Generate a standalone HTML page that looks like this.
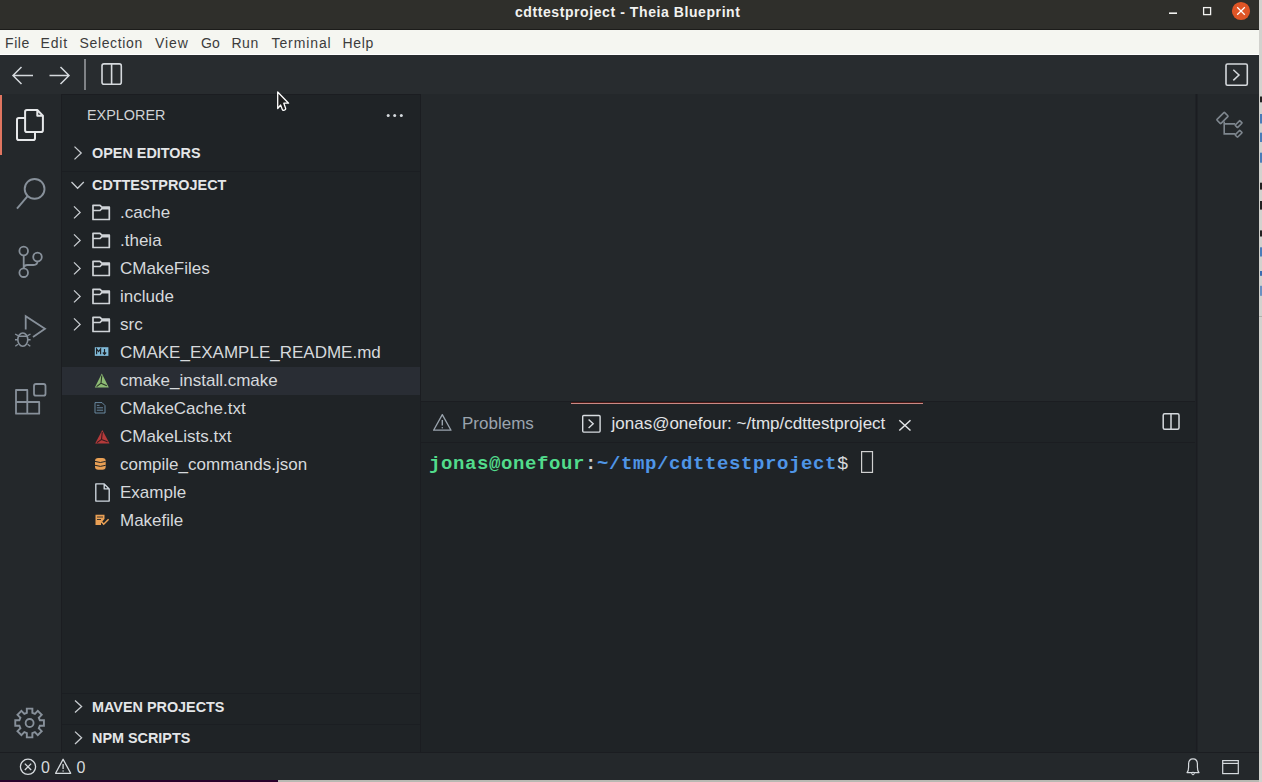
<!DOCTYPE html>
<html><head><meta charset="utf-8">
<style>
*{margin:0;padding:0;box-sizing:border-box}
html,body{width:1262px;height:782px;overflow:hidden;background:#1f2326;font-family:"Liberation Sans",sans-serif}
.a{position:absolute}
.t{white-space:pre}
</style></head><body>
<div class="a" style="left:0px;top:0px;width:1262px;height:29px;background:#2f2f2b;"></div>
<div class="a" style="left:0px;top:29px;width:1262px;height:1px;background:#1c1c1a;"></div>
<div class="a" style="left:0px;top:30px;width:1262px;height:25px;background:#f5f6f1;"></div>
<div class="a" style="left:0px;top:54px;width:1262px;height:1px;background:#ffffff;"></div>
<div class="a" style="left:0px;top:55px;width:1262px;height:39px;background:#282c2f;"></div>
<div class="a" style="left:0px;top:94px;width:62px;height:658px;background:#24282b;"></div>
<div class="a" style="left:62px;top:94px;width:358px;height:658px;background:#1f2326;"></div>
<div class="a" style="left:420px;top:94px;width:1px;height:658px;background:#1b1d21;"></div>
<div class="a" style="left:61px;top:94px;width:1px;height:658px;background:#1b1d21;"></div>
<div class="a" style="left:61px;top:94px;width:359px;height:1px;background:#1b1d21;"></div>
<div class="a" style="left:421px;top:94px;width:774px;height:307px;background:#24282b;"></div>
<div class="a" style="left:421px;top:401px;width:774px;height:351px;background:#1f2326;"></div>
<div class="a" style="left:421px;top:401px;width:774px;height:1px;background:#1b1d21;"></div>
<div class="a" style="left:1195px;top:94px;width:3px;height:658px;background:#1f2226;"></div>
<div class="a" style="left:1196px;top:94px;width:1px;height:658px;background:#1b1d21;"></div>
<div class="a" style="left:1198px;top:94px;width:61px;height:658px;background:#24282b;"></div>
<div class="a" style="left:0px;top:752px;width:1259px;height:28px;background:#24282b;"></div>
<div class="a" style="left:0px;top:752px;width:1259px;height:1px;background:#1b1d21;"></div>
<div class="a" style="left:0px;top:780px;width:278px;height:2px;background:#29002a;"></div>
<div class="a" style="left:278px;top:780px;width:984px;height:2px;background:#b8b8b2;"></div>
<div class="a" style="left:1259px;top:0px;width:3px;height:782px;background:#d2d2ce;"></div>
<div class="a" style="left:0px;top:95px;width:2px;height:60px;background:#e07560;"></div>
<div class="a t" style="left:515px;top:2.15px;font-size:14px;line-height:20px;color:#f2f2f0;font-weight:700;font-family:'Liberation Sans';letter-spacing:0.58px">cdttestproject - Theia Blueprint</div>
<div class="a t" style="left:5px;top:33.15px;font-size:14px;line-height:20px;color:#3c3c3c;font-weight:400;font-family:'Liberation Sans';letter-spacing:0.6px">File</div>
<div class="a t" style="left:40.5px;top:33.15px;font-size:14px;line-height:20px;color:#3c3c3c;font-weight:400;font-family:'Liberation Sans';letter-spacing:0.8px">Edit</div>
<div class="a t" style="left:79.5px;top:33.15px;font-size:14px;line-height:20px;color:#3c3c3c;font-weight:400;font-family:'Liberation Sans';letter-spacing:0.65px">Selection</div>
<div class="a t" style="left:155px;top:33.15px;font-size:14px;line-height:20px;color:#3c3c3c;font-weight:400;font-family:'Liberation Sans';letter-spacing:0.9px">View</div>
<div class="a t" style="left:201px;top:33.15px;font-size:14px;line-height:20px;color:#3c3c3c;font-weight:400;font-family:'Liberation Sans';letter-spacing:0px">Go</div>
<div class="a t" style="left:231.5px;top:33.15px;font-size:14px;line-height:20px;color:#3c3c3c;font-weight:400;font-family:'Liberation Sans';letter-spacing:0.5px">Run</div>
<div class="a t" style="left:271.5px;top:33.15px;font-size:14px;line-height:20px;color:#3c3c3c;font-weight:400;font-family:'Liberation Sans';letter-spacing:0.9px">Terminal</div>
<div class="a t" style="left:342.5px;top:33.15px;font-size:14px;line-height:20px;color:#3c3c3c;font-weight:400;font-family:'Liberation Sans';letter-spacing:0.65px">Help</div>
<div class="a t" style="left:87px;top:105.01px;font-size:14.4px;line-height:20px;color:#d0d3d6;font-weight:400;font-family:'Liberation Sans';">EXPLORER</div>
<div class="a t" style="left:92px;top:142.51px;font-size:14.4px;line-height:20px;color:#e4e6e8;font-weight:700;font-family:'Liberation Sans';">OPEN EDITORS</div>
<div class="a" style="left:62px;top:171px;width:358px;height:1px;background:#1b1e22;"></div>
<div class="a t" style="left:92px;top:174.61px;font-size:14.4px;line-height:20px;color:#e4e6e8;font-weight:700;font-family:'Liberation Sans';">CDTTESTPROJECT</div>
<div class="a" style="left:62px;top:367px;width:358px;height:28px;background:#292d34;"></div>
<div class="a t" style="left:120px;top:201.11px;font-size:17px;line-height:24px;color:#d6d9dc;font-weight:400;font-family:'Liberation Sans';">.cache</div>
<div class="a t" style="left:120px;top:229.11px;font-size:17px;line-height:24px;color:#d6d9dc;font-weight:400;font-family:'Liberation Sans';">.theia</div>
<div class="a t" style="left:120px;top:257.11px;font-size:17px;line-height:24px;color:#d6d9dc;font-weight:400;font-family:'Liberation Sans';">CMakeFiles</div>
<div class="a t" style="left:120px;top:285.11px;font-size:17px;line-height:24px;color:#d6d9dc;font-weight:400;font-family:'Liberation Sans';">include</div>
<div class="a t" style="left:120px;top:313.11px;font-size:17px;line-height:24px;color:#d6d9dc;font-weight:400;font-family:'Liberation Sans';">src</div>
<div class="a t" style="left:120px;top:341.11px;font-size:17px;line-height:24px;color:#d6d9dc;font-weight:400;font-family:'Liberation Sans';">CMAKE_EXAMPLE_README.md</div>
<div class="a t" style="left:120px;top:369.11px;font-size:17px;line-height:24px;color:#d6d9dc;font-weight:400;font-family:'Liberation Sans';">cmake_install.cmake</div>
<div class="a t" style="left:120px;top:397.11px;font-size:17px;line-height:24px;color:#d6d9dc;font-weight:400;font-family:'Liberation Sans';">CMakeCache.txt</div>
<div class="a t" style="left:120px;top:425.11px;font-size:17px;line-height:24px;color:#d6d9dc;font-weight:400;font-family:'Liberation Sans';">CMakeLists.txt</div>
<div class="a t" style="left:120px;top:453.11px;font-size:17px;line-height:24px;color:#d6d9dc;font-weight:400;font-family:'Liberation Sans';">compile_commands.json</div>
<div class="a t" style="left:120px;top:481.11px;font-size:17px;line-height:24px;color:#d6d9dc;font-weight:400;font-family:'Liberation Sans';">Example</div>
<div class="a t" style="left:120px;top:509.11px;font-size:17px;line-height:24px;color:#d6d9dc;font-weight:400;font-family:'Liberation Sans';">Makefile</div>
<div class="a" style="left:62px;top:693px;width:358px;height:1px;background:#1b1e22;"></div>
<div class="a t" style="left:92px;top:697.31px;font-size:14.4px;line-height:20px;color:#e4e6e8;font-weight:700;font-family:'Liberation Sans';">MAVEN PROJECTS</div>
<div class="a" style="left:62px;top:724px;width:358px;height:1px;background:#1b1e22;"></div>
<div class="a t" style="left:92px;top:728.21px;font-size:14.4px;line-height:20px;color:#e4e6e8;font-weight:700;font-family:'Liberation Sans';">NPM SCRIPTS</div>
<div class="a t" style="left:462px;top:412.11px;font-size:17px;line-height:24px;color:#9aa4ae;font-weight:400;font-family:'Liberation Sans';">Problems</div>
<div class="a" style="left:571px;top:402px;width:352px;height:1px;background:#4a1816;"></div>
<div class="a" style="left:571px;top:403px;width:352px;height:1px;background:#c98a85;"></div>
<div class="a" style="left:421px;top:442px;width:774px;height:1px;background:#1b1d21;"></div>
<div class="a t" style="left:611.5px;top:412.11px;font-size:17px;line-height:24px;color:#e2e4e6;font-weight:400;font-family:'Liberation Sans';">jonas@onefour: ~/tmp/cdttestproject</div>
<div class="a t" style="left:429px;top:452px;font-family:'Liberation Mono';font-weight:bold;font-size:19px;letter-spacing:0.6px;line-height:24px"><span style="color:#52dc8c">jonas@onefour</span><span style="color:#d0d0d0">:</span><span style="color:#4f95e6">~/tmp/cdttestproject</span><span style="color:#d4d8dc;font-weight:normal">$ </span></div>
<div class="a t" style="left:41px;top:756.96px;font-size:16px;line-height:22px;color:#d6dade;font-weight:400;font-family:'Liberation Sans';">0</div>
<div class="a t" style="left:76.5px;top:756.96px;font-size:16px;line-height:22px;color:#d6dade;font-weight:400;font-family:'Liberation Sans';">0</div>
<svg class="a" style="left:0;top:0" width="1262" height="782" viewBox="0 0 1262 782"><rect x="1169" y="12.4" width="8" height="1.6" fill="#f2f2f0"/><rect x="1203.6" y="7.6" width="7" height="7" fill="none" stroke="#f2f2f0" stroke-width="1.3"/><circle cx="1241" cy="11" r="9.1" fill="#df5526"/><path d="M1237.2 7.2 L1244.8 14.8 M1244.8 7.2 L1237.2 14.8" stroke="#fff" stroke-width="1.25"/><path d="M33 75.5 H13 M21.5 67 L13 75.5 L21.5 84" fill="none" stroke="#d5d9dd" stroke-width="1.5"/><path d="M49.5 75.5 H69 M60.5 67 L69 75.5 L60.5 84" fill="none" stroke="#d5d9dd" stroke-width="1.5"/><rect x="84" y="59" width="2" height="31" fill="#7f8286"/><rect x="102" y="63.9" width="19.3" height="20.4" rx="2" fill="none" stroke="#d5d9dd" stroke-width="1.6"/><path d="M111.6 64 V84" stroke="#d5d9dd" stroke-width="1.6"/><rect x="1226" y="64" width="21.3" height="21.3" rx="1.5" fill="none" stroke="#d5d9dd" stroke-width="1.6"/><path d="M1233.3 69.8 L1239 75 L1233.3 80.4" fill="none" stroke="#d5d9dd" stroke-width="1.5"/><path d="M25.1 118 H18.8 Q17 118 17 119.8 V138.2 Q17 140 18.8 140 H33.2 Q35 140 35 138.2 V132.1" fill="none" stroke="#e6e8ea" stroke-width="2" stroke-linejoin="round"/><path d="M25.1 111.8 Q25.1 110 26.9 110 H37.3 L42.9 115.6 V130.3 Q42.9 132.1 41.1 132.1 H26.9 Q25.1 132.1 25.1 130.3 Z M37.3 110 V115.8 H42.9" fill="none" stroke="#e6e8ea" stroke-width="2" stroke-linejoin="round"/><circle cx="34.6" cy="188.9" r="9.9" fill="none" stroke="#87909a" stroke-width="1.9"/><path d="M27.6 196.2 L17 208.6" stroke="#87909a" stroke-width="1.9"/><circle cx="23.7" cy="251" r="4.3" fill="none" stroke="#87909a" stroke-width="1.8"/><circle cx="23.7" cy="272.7" r="4.3" fill="none" stroke="#87909a" stroke-width="1.8"/><circle cx="37.5" cy="257" r="4.3" fill="none" stroke="#87909a" stroke-width="1.8"/><path d="M23.7 255.3 V268.4 M37.5 261.3 Q37.5 265 33.5 265 H27.5 Q23.7 265 23.7 268.4" fill="none" stroke="#87909a" stroke-width="1.8"/><path d="M25.7 329.6 V316.2 L45 328.7 L33 336.9" fill="none" stroke="#87909a" stroke-width="1.8"/><ellipse cx="22.8" cy="339.6" rx="5" ry="6.6" fill="none" stroke="#87909a" stroke-width="1.6"/><path d="M18 336.3 H27.6 M15.1 334 L18 335.6 M15 339.8 H18 M15.3 346.2 L18 344.3 M30.5 334 L27.6 335.6 M30.6 339.8 H27.6 M30.3 346.2 L27.6 344.3" fill="none" stroke="#87909a" stroke-width="1.4"/><path d="M16 390 H27.3 V413.7 H16 Z M16 402 H39.2 V413.7 H27.3" fill="none" stroke="#87909a" stroke-width="1.8" stroke-linejoin="round"/><rect x="34" y="384" width="11.5" height="11.7" rx="2" fill="none" stroke="#87909a" stroke-width="1.8"/><path d="M26.86 712.76 L26.81 708.67 L32.39 708.67 L32.34 712.76 L34.90 713.82 L37.76 710.90 L41.70 714.84 L38.78 717.70 L39.84 720.26 L43.93 720.21 L43.93 725.79 L39.84 725.74 L38.78 728.30 L41.70 731.16 L37.76 735.10 L34.90 732.18 L32.34 733.24 L32.39 737.33 L26.81 737.33 L26.86 733.24 L24.30 732.18 L21.44 735.10 L17.50 731.16 L20.42 728.30 L19.36 725.74 L15.27 725.79 L15.27 720.21 L19.36 720.26 L20.42 717.70 L17.50 714.84 L21.44 710.90 L24.30 713.82 Z" fill="none" stroke="#87909a" stroke-width="1.9" stroke-linejoin="miter"/><circle cx="29.6" cy="723" r="4" fill="none" stroke="#87909a" stroke-width="1.8"/><circle cx="388.2" cy="115.5" r="1.5" fill="#d5d9dd"/><circle cx="394.7" cy="115.5" r="1.5" fill="#d5d9dd"/><circle cx="401.3" cy="115.5" r="1.5" fill="#d5d9dd"/><path d="M74.5 146.6 L81.2 153 L74.5 159.4" fill="none" stroke="#c8ccd0" stroke-width="1.3"/><path d="M71.5 182 L77.6 188.3 L83.8 182" fill="none" stroke="#c8ccd0" stroke-width="1.3"/><path d="M75 700.4 L81.6 706.4 L75 712.4 M75 731.6 L81.6 737.8 L75 744" fill="none" stroke="#c8ccd0" stroke-width="1.3"/><path d="M74 206.4 L80.1 212.4 L74 218.4" fill="none" stroke="#c8ccd0" stroke-width="1.3"/><path d="M93 219.5 V205.3 H100 L101.8 207.2 H109.3 V219.5 Z M93 210.5 H100 L101.8 208.7 H109.3" fill="none" stroke="#d0d4d8" stroke-width="1.7" stroke-linejoin="round"/><path d="M74 234.4 L80.1 240.4 L74 246.4" fill="none" stroke="#c8ccd0" stroke-width="1.3"/><path d="M93 247.5 V233.3 H100 L101.8 235.2 H109.3 V247.5 Z M93 238.5 H100 L101.8 236.7 H109.3" fill="none" stroke="#d0d4d8" stroke-width="1.7" stroke-linejoin="round"/><path d="M74 262.4 L80.1 268.4 L74 274.4" fill="none" stroke="#c8ccd0" stroke-width="1.3"/><path d="M93 275.5 V261.3 H100 L101.8 263.2 H109.3 V275.5 Z M93 266.5 H100 L101.8 264.7 H109.3" fill="none" stroke="#d0d4d8" stroke-width="1.7" stroke-linejoin="round"/><path d="M74 290.4 L80.1 296.4 L74 302.4" fill="none" stroke="#c8ccd0" stroke-width="1.3"/><path d="M93 303.5 V289.3 H100 L101.8 291.2 H109.3 V303.5 Z M93 294.5 H100 L101.8 292.7 H109.3" fill="none" stroke="#d0d4d8" stroke-width="1.7" stroke-linejoin="round"/><path d="M74 318.4 L80.1 324.4 L74 330.4" fill="none" stroke="#c8ccd0" stroke-width="1.3"/><path d="M93 331.5 V317.3 H100 L101.8 319.2 H109.3 V331.5 Z M93 322.5 H100 L101.8 320.7 H109.3" fill="none" stroke="#d0d4d8" stroke-width="1.7" stroke-linejoin="round"/><rect x="94.8" y="347.2" width="13.6" height="8.7" fill="#7fb8d6"/><path d="M96.6 354.3 V349 L98.6 351.6 L100.6 349 V354.3 M104.5 349 V354.3 M102.8 352.5 L104.5 354.3 L106.2 352.5" fill="none" stroke="#1f2327" stroke-width="1.2"/><path d="M101.8 373.4 L108.8 387.6 H94.8 Z" fill="#8dbb74"/><path d="M101.8 375.5 L101 383.2 L96.6 386.6 M101 383.2 L106.8 385.8" fill="none" stroke="#2b3527" stroke-width="1.1"/><path d="M95 402.6 H102 L105 405.6 V413 H95 Z" fill="none" stroke="#7093ad" stroke-width="0.9"/><path d="M96.8 405.3 H99.5 M96.8 407.8 H103 M96.8 410.2 H103" stroke="#7093ad" stroke-width="0.9"/><path d="M102.3 430 L109.5 443.6 H95.2 Z" fill="#b43a3a"/><path d="M102.3 432 L101.5 439.4 L97 442.6 M101.5 439.4 L107.5 441.8" fill="none" stroke="#3a1c20" stroke-width="1.1"/><rect x="95" y="457.9" width="10.7" height="11.8" rx="3.2" fill="#e9a055"/><path d="M95 461.4 Q100.35 463.6 105.7 461.4 M95 465.3 Q100.35 467.5 105.7 465.3" fill="none" stroke="#1f2326" stroke-width="1"/><path d="M95.8 483.9 H104.2 L109.2 488.9 V501.1 H95.8 Z M104.2 483.9 V488.9 H109.2" fill="none" stroke="#d0d8e0" stroke-width="1.35" stroke-linejoin="round"/><path d="M95.5 514.8 H104.5 V519 L101 523 V525 H95.5 Z" fill="#e9a055"/><path d="M97 517 H103 M97 519.5 H101" stroke="#2a2a2a" stroke-width="0.9"/><path d="M101.5 521.8 L103.7 524.2 L108.6 519.3" fill="none" stroke="#e9a055" stroke-width="1.6"/><path d="M442.3 414.6 L451 430.2 H433.6 Z" fill="none" stroke="#9aa4ae" stroke-width="1.3" stroke-linejoin="round"/><path d="M442.3 420 V425.5" stroke="#9aa4ae" stroke-width="1.4"/><circle cx="442.3" cy="427.7" r="0.8" fill="#9aa4ae"/><rect x="582.7" y="415.5" width="17.4" height="16.6" rx="1" fill="none" stroke="#d8dce0" stroke-width="1.4"/><path d="M588.6 419.5 L593.2 423.8 L588.6 428.1" fill="none" stroke="#d8dce0" stroke-width="1.4"/><path d="M899.3 420.3 L910.5 430.5 M910.5 420.3 L899.3 430.5" stroke="#e2e4e6" stroke-width="1.5"/><rect x="1163.2" y="413.7" width="15.8" height="15.6" rx="1.5" fill="none" stroke="#d5d9dd" stroke-width="1.5"/><path d="M1171 414 V429.5" stroke="#d5d9dd" stroke-width="1.5"/><rect x="861.6" y="451.6" width="10.9" height="20.8" fill="none" stroke="#d0d0d0" stroke-width="1.2"/><rect x="-5.4" y="-2.8" width="10.8" height="5.6" rx="0.6" transform="translate(1222.45 118) rotate(-45)" fill="none" stroke="#7e868e" stroke-width="1.6"/><path d="M1224.2 121.5 V133.9 H1235.2 M1224.2 123.9 H1235.2" fill="none" stroke="#7e868e" stroke-width="1.6"/><rect x="-3.3" y="-1.7" width="6.6" height="3.4" rx="0.4" transform="translate(1238.6 124.1) rotate(-45)" fill="none" stroke="#7e868e" stroke-width="1.6"/><rect x="-3.3" y="-1.7" width="6.6" height="3.4" rx="0.4" transform="translate(1238.6 133.8) rotate(-45)" fill="none" stroke="#7e868e" stroke-width="1.6"/><circle cx="28" cy="766.8" r="7.6" fill="none" stroke="#d6dade" stroke-width="1.3"/><path d="M24.8 763.6 L31.2 770 M31.2 763.6 L24.8 770" stroke="#d6dade" stroke-width="1.3"/><path d="M63.1 759.3 L70.7 773.3 H55.6 Z" fill="none" stroke="#d6dade" stroke-width="1.3" stroke-linejoin="round"/><path d="M63.1 764 V769" stroke="#d6dade" stroke-width="1.3"/><circle cx="63.1" cy="771" r="0.7" fill="#d6dade"/><path d="M1187 772.6 Q1188.6 771 1188.6 767 V764 Q1188.6 758.8 1193 758.8 Q1197.4 758.8 1197.4 764 V767 Q1197.4 771 1199 772.6 Z" fill="none" stroke="#d6dade" stroke-width="1.2" stroke-linejoin="round"/><circle cx="1193" cy="773.5" r="1.3" fill="none" stroke="#d6dade" stroke-width="1"/><rect x="1222.7" y="760.6" width="15.6" height="13" fill="none" stroke="#d6dade" stroke-width="1.2"/><path d="M1222.7 763.4 H1238.3" stroke="#d6dade" stroke-width="1.2"/><rect x="1260" y="96.5" width="2" height="5.8" fill="#222"/><rect x="1260" y="114" width="2" height="9.5" fill="#4a7cb8"/><rect x="1260" y="132.7" width="2" height="9.3" fill="#4a7cb8"/><rect x="1260" y="152.7" width="2" height="10.0" fill="#4a7cb8"/><rect x="1260" y="182.7" width="2" height="6.9" fill="#222"/><rect x="1260" y="201" width="2" height="8.6" fill="#222"/><rect x="1260" y="230.4" width="2" height="6.1" fill="#222"/><rect x="1260" y="247.3" width="2" height="9.2" fill="#4a7cb8"/><rect x="1260" y="271" width="2" height="4.8" fill="#3a6cb0"/><rect x="1260" y="285.8" width="2" height="10.0" fill="#6a90c0"/><rect x="1259" y="316" width="3" height="1" fill="#b0b0aa"/><path d="M277.7 92 L288.6 103.2 H283.8 L285.6 108.2 Q286 109.8 284.4 110.2 Q282.6 110.6 282.2 109.2 L280.6 105 L277.7 108.6 Z" fill="#1e1e1e" stroke="#ffffff" stroke-width="1.3" stroke-linejoin="round"/></svg>
</body></html>
